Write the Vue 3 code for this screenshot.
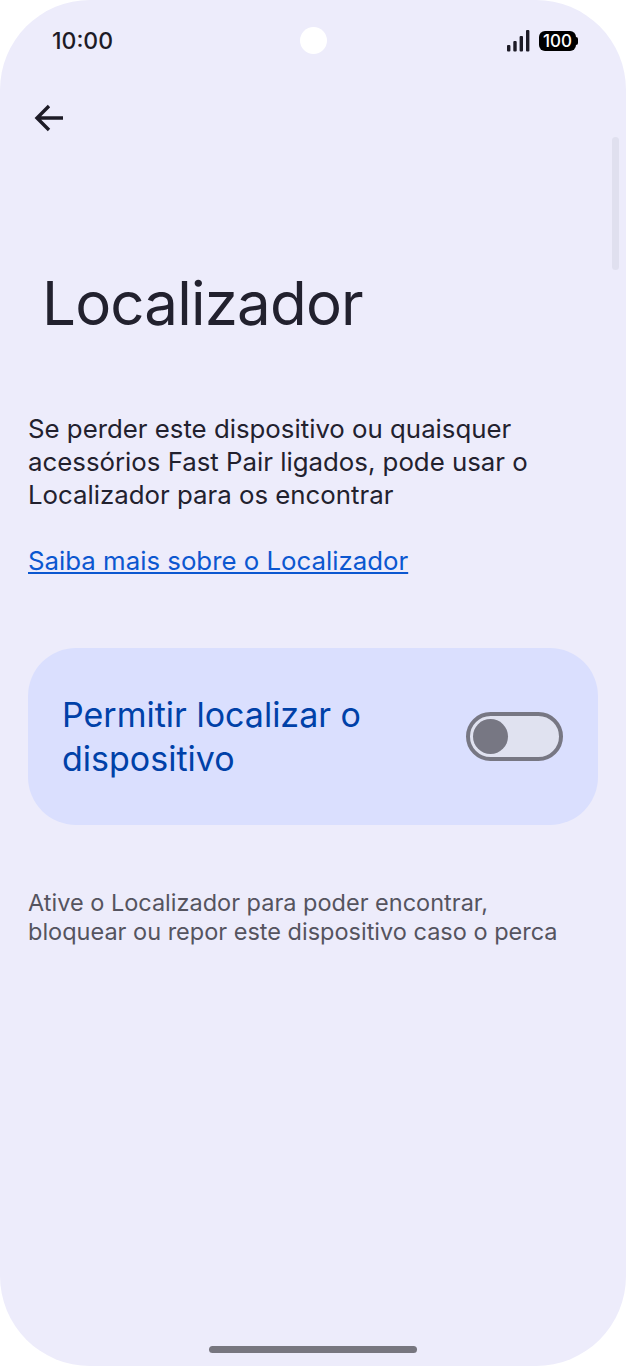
<script setup>
const title = "Localizador";
</script>
<template>
  <div class="phone">
    <div class="status">
      <span class="time">10:00</span>
      <div class="status-right">
        <svg width="24" height="22" viewBox="0 0 24 22">
          <rect x="0" y="15" width="3.4" height="6.5" rx="1" fill="#1d1b26" />
          <rect x="6.3" y="11" width="3.4" height="10.5" rx="1" fill="#1d1b26" />
          <rect x="12.6" y="6" width="3.4" height="15.5" rx="1" fill="#1d1b26" />
          <rect x="19" y="0" width="3.4" height="21.5" rx="1" fill="#1d1b26" />
        </svg>
        <div class="battery">100</div>
      </div>
    </div>
    <div class="camera"></div>
    <div class="scrollbar"></div>

    <div class="back">
      <svg width="30" height="30" viewBox="0 0 30 30" fill="none" stroke="#1d1b26" stroke-width="3.4">
        <path d="M29 15H3.5M15 3 3 15l12 12" />
      </svg>
    </div>

    <h1>{{ title }}</h1>

    <p class="intro">Se perder este dispositivo ou quaisquer acessórios Fast Pair ligados, pode usar o Localizador para os encontrar</p>
    <a class="link" href="#">Saiba mais sobre o Localizador</a>

    <div class="card">
      <span class="card-label">Permitir localizar o dispositivo</span>
      <div class="switch"><div class="thumb"></div></div>
    </div>

    <p class="note">Ative o Localizador para poder encontrar, bloquear ou repor este dispositivo caso o perca</p>

    <div class="spacer"></div>
    <div class="home"></div>
  </div>
</template>
<style>
html, body { margin: 0; background: #fff; }
</style>
<style scoped>
.phone {
  position: relative;
  width: 626px;
  height: 1366px;
  box-sizing: border-box;
  background: #edecfb;
  border-radius: 90px;
  overflow: hidden;
  display: flex;
  flex-direction: column;
  font-family: Inter, "Open Sans", sans-serif;
  color: #22212e;
}
.status {
  height: 40px;
  padding: 21px 50px 0 52px;
  display: flex;
  justify-content: space-between;
  align-items: center;
}
.time {
  font-size: 23px;
  font-weight: 500;
  color: #1d1b26;
}
.status-right {
  display: flex;
  align-items: center;
  gap: 8px;
}
.battery {
  position: relative;
  width: 37px;
  height: 20px;
  background: #000;
  border-radius: 6px;
  color: #fff;
  font-size: 17px;
  font-weight: 500;
  line-height: 20px;
  text-align: center;
}
.battery::after {
  content: "";
  position: absolute;
  right: -2px;
  top: 6px;
  width: 2px;
  height: 8px;
  border-radius: 0 2px 2px 0;
  background: #000;
}
.camera {
  position: absolute;
  left: 300px;
  top: 27px;
  width: 27px;
  height: 27px;
  border-radius: 50%;
  background: #fff;
}
.scrollbar {
  position: absolute;
  right: 7px;
  top: 137px;
  width: 7px;
  height: 133px;
  border-radius: 4px;
  background: #e0e0ef;
}
.back {
  margin: 42px 0 0 34px;
  height: 30px;
}
h1 {
  margin: 0;
  padding: 128px 0 0 42px;
  font-size: 60px;
  font-weight: 400;
  line-height: 84px;
  letter-spacing: -0.8px;
}
.intro {
  margin: 0;
  padding: 67px 80px 0 28px;
  font-size: 25.8px;
  line-height: 33px;
}
.link {
  margin: 33px 0 0 28px;
  font-size: 25.8px;
  line-height: 33px;
  color: #0b57d0;
}
.card {
  margin: 71px 28px 0;
  height: 177px;
  box-sizing: border-box;
  padding: 0 35px 0 34px;
  border-radius: 48px;
  background: #dadffe;
  display: flex;
  align-items: center;
  justify-content: space-between;
}
.card-label {
  width: 340px;
  font-size: 34px;
  line-height: 44px;
  color: #0041a8;
}
.switch {
  width: 97px;
  height: 49px;
  box-sizing: border-box;
  border: 4px solid #777783;
  border-radius: 25px;
  background: #e0e2f0;
  display: flex;
  align-items: center;
  padding-left: 3px;
}
.thumb {
  width: 35px;
  height: 35px;
  border-radius: 50%;
  background: #777783;
}
.note {
  margin: 0;
  padding: 63px 60px 0 28px;
  font-size: 23.5px;
  line-height: 29px;
  color: #55545f;
}
.spacer { flex: 1; }
.home {
  align-self: center;
  width: 208px;
  height: 7px;
  margin-bottom: 13px;
  border-radius: 4px;
  background: #77767f;
}
</style>
